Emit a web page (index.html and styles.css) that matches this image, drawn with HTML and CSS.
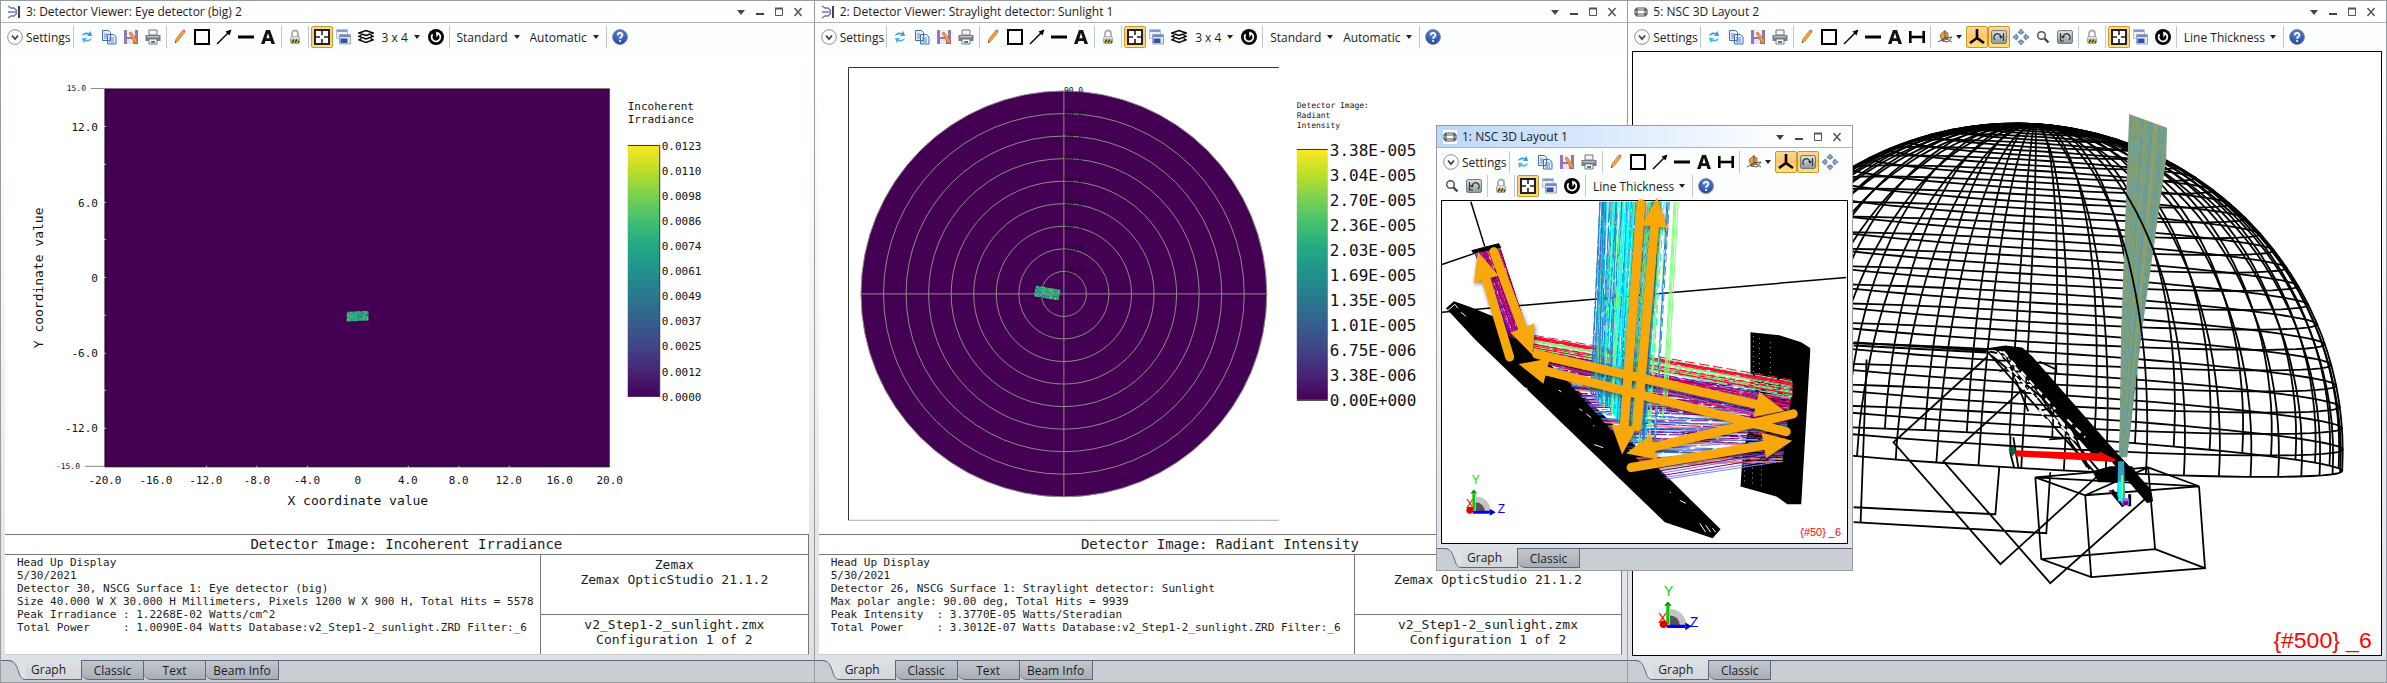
FILE: index.html
```html
<!DOCTYPE html>
<html lang="en">
<head>
  <meta charset="UTF-8" />
  <title>OpticStudio - Head Up Display</title>
  <meta name="viewport" content="width=device-width, initial-scale=1.0">
  <link rel="stylesheet" href="styles.css">
</head>
<body>

  <!-- shared icons -->
  <svg class="defs" width="0" height="0" aria-hidden="true">
    <defs>
      <linearGradient id="viridis" x1="0" y1="1" x2="0" y2="0">
        <stop offset="0" stop-color="#440154"/><stop offset=".1" stop-color="#482475"/>
        <stop offset=".2" stop-color="#414487"/><stop offset=".3" stop-color="#355f8d"/>
        <stop offset=".4" stop-color="#2a788e"/><stop offset=".5" stop-color="#21918c"/>
        <stop offset=".6" stop-color="#22a884"/><stop offset=".7" stop-color="#44bf70"/>
        <stop offset=".8" stop-color="#7ad151"/><stop offset=".9" stop-color="#bddf26"/>
        <stop offset="1" stop-color="#fde725"/>
      </linearGradient>
      <linearGradient id="lockBody" x1="0" y1="0" x2="0" y2="1">
        <stop offset="0" stop-color="#eee"/><stop offset="1" stop-color="#999"/>
      </linearGradient>
      <linearGradient id="greyBtn" x1="0" y1="0" x2="0" y2="1">
        <stop offset="0" stop-color="#dfe5e6"/><stop offset="1" stop-color="#8f9b9e"/>
      </linearGradient>
      <radialGradient id="helpFill" cx=".5" cy=".3" r=".8">
        <stop offset="0" stop-color="#5b8be0"/><stop offset="1" stop-color="#153a94"/>
      </radialGradient>

      <symbol id="i-detector" viewBox="0 0 14 14">
        <path d="M12 1v12" stroke="#444" stroke-width="2"/>
        <path d="M1 1l3 2h3l3 3M1 7h9M1 13l3-2h3l3-3" fill="none" stroke="#6b74c4" stroke-width="1.4"/>
      </symbol>
      <symbol id="i-layout" viewBox="0 0 14 14">
        <path d="M3 3h8v8H3zM3 3L1 5v4l2 2M11 3l2 2v4l-2 2M1 5h12M1 9h12" fill="none" stroke="#555" stroke-width="1.200"/>
      </symbol>
      <symbol id="i-chevron" viewBox="0 0 16 16">
        <circle cx="8" cy="8" r="7.300" fill="#fff" stroke="#8a8f96"/>
        <path d="M5 6.500l3 3.500 3-3.500" fill="none" stroke="#444" stroke-width="1.800"/>
      </symbol>
      <symbol id="i-refresh" viewBox="0 0 16 16">
        <path d="M3 7c.5-3 4-4.500 7-3l1.500-2 1.500 5H8l1.500-1.500C7.500 4.700 5 5.500 3 7z" fill="#2f9de0"/>
        <path d="M13 9c-.5 3-4 4.500-7 3l-1.500 2L3 9h5l-1.500 1.500C8.500 11.300 11 10.500 13 9z" fill="#45b4ee"/>
      </symbol>
      <symbol id="i-copy" viewBox="0 0 16 16">
        <path d="M1.500 1.500h6l2 2v8h-8zM6.500 5.500h6l2.500 2.500v7H6.500z" fill="#e8f1fc" stroke="#3f6db5"/>
        <path d="M3 5h3M3 7h3M3 9h3M8 9h5M8 11h5M8 13h5" stroke="#5b86c8"/>
      </symbol>
      <symbol id="i-save" viewBox="0 0 16 16">
        <path d="M1 1h14v14H1z" fill="#9077b5"/>
        <path d="M4 1h8v7H4z" fill="#f4effa"/><path d="M4 10h6v5H4z" fill="#e9e2f2"/>
        <path d="M6 4l2-1 6 8 .5 4-3.500-2z" fill="#f0a030" stroke="#b5452c" stroke-width=".5"/>
      </symbol>
      <symbol id="i-print" viewBox="0 0 16 16">
        <path d="M4 1h8v5H4z" fill="#f5f5f5" stroke="#777"/>
        <path d="M.5 6h15v6H.5z" fill="#777c80"/><path d="M2 7h12v1.500H2z" fill="#b9bec2"/>
        <path d="M4 10h8v5H4z" fill="#fff" stroke="#777"/><path d="M6 12h2v2H6z" fill="#2a9d8f"/><path d="M8 12h2v2H8z" fill="#3771c8"/>
      </symbol>
      <symbol id="i-pencil" viewBox="0 0 16 16">
        <path d="M3 14l1-4 7-9 2 2-7 9z" fill="#f3a43a" stroke="#b9682a" stroke-width=".7"/>
        <path d="M11 1l2 2 .6-1.200L12 .4z" fill="#d2625a"/><path d="M3 14l.5-2 1 1z" fill="#333"/>
      </symbol>
      <symbol id="i-rect" viewBox="0 0 16 16"><path d="M1 1h14v14H1z" fill="none" stroke="#000" stroke-width="2"/></symbol>
      <symbol id="i-arrow" viewBox="0 0 16 16">
        <path d="M1 15L12 4" stroke="#000" stroke-width="1.500"/><path d="M15.500.5l-2 6-4-4z"/>
      </symbol>
      <symbol id="i-line" viewBox="0 0 16 16"><path d="M0 8h16" stroke="#000" stroke-width="3"/></symbol>
      <symbol id="i-text" viewBox="0 0 16 16">
        <path d="M1 15L6 1h4l5 14h-3.500l-1-3h-5l-1 3zM6.400 9.300h3.200L8 4z" fill="#111" fill-rule="evenodd"/>
      </symbol>
      <symbol id="i-dim" viewBox="0 0 16 16"><path d="M1.300 2v12M14.700 2v12" stroke="#000" stroke-width="2.600"/><path d="M2 8h12" stroke="#000" stroke-width="2.600"/></symbol>
      <symbol id="i-lock" viewBox="0 0 16 16">
        <path d="M5 8V4.500a3 3 0 0 1 6 0V8" fill="none" stroke="#a9adb1" stroke-width="1.800"/>
        <rect x="3.500" y="7.500" width="9" height="7" rx="1.500" fill="url(#lockBody)" stroke="#8c8c8c" stroke-width=".6"/>
        <path d="M4 10.500h8v3H4z" fill="#d8bb32"/><path d="M5 13.500l2-3M8 13.500l2-3M11 13.500l1-1.500" stroke="#222" stroke-width="1.300"/>
      </symbol>
      <symbol id="i-fit" viewBox="0 0 16 16">
        <path d="M1 1h14v14H1z" fill="#fff" stroke="#222" stroke-width="2"/>
        <path d="M8 2v4M8 10v4M2 8h4M10 8h4" fill="none" stroke="#222" stroke-width="1.600"/>
      </symbol>
      <symbol id="i-windows" viewBox="0 0 16 16">
        <path d="M.5.500h11v9H.5z" fill="#eaf1fb" stroke="#b5c2da"/><path d="M1 1h10v2H1z" fill="#7f9bd6"/>
        <path d="M3.500 5.500h11v9.500h-11z" fill="#e3e9f5" stroke="#98a3bf"/><path d="M4 6h10v2H4z" fill="#6d88cc"/><path d="M4.500 9.500h7v4.500h-7z" fill="#3650a8"/>
      </symbol>
      <symbol id="i-layers" viewBox="0 0 16 16">
        <path d="M1 4l7-2.500L15 4 8 6.500zM3.500 6L1 7.300l7 2.700 7-2.700L12.500 6M3.500 9.500L1 10.800l7 2.700 7-2.700-2.500-1.300" fill="none" stroke="#000" stroke-width="1.400"/>
      </symbol>
      <symbol id="i-reset" viewBox="0 0 16 16">
        <circle cx="8" cy="8" r="8"/><path d="M4.600 5.200A4.400 4.400 0 1 0 9.800 4" fill="none" stroke="#fff" stroke-width="1.800"/>
        <path d="M8 2.600l3.600 1.700L8.500 8.500z" fill="#fff"/>
      </symbol>
      <symbol id="i-help" viewBox="0 0 16 16">
        <circle cx="8" cy="8" r="7.400" fill="url(#helpFill)" stroke="#7f8793"/>
        <path d="M5.700 6.200c0-3 4.800-3 4.700-.2 0 1.700-2.300 1.800-2.300 3.700" fill="none" stroke="#fff" stroke-width="1.800"/><circle cx="8.100" cy="12" r="1.100" fill="#fff"/>
      </symbol>
      <symbol id="i-view" viewBox="0 0 16 16">
        <path d="M3 6l4-4 4 2v6l-6 2z" fill="#ee9a32" stroke="#7b5a2a" stroke-width=".7"/>
        <path d="M8 1v8l7 4M8 9L1 13M5 12l3-3 7-1-4 5z" fill="none" stroke="#555"/>
      </symbol>
      <symbol id="i-tripod" viewBox="0 0 16 16"><path d="M8 0v9l7 5M8 9l-7 5" fill="none" stroke="#000" stroke-width="2.600"/></symbol>
      <symbol id="i-rotate" viewBox="0 0 16 16">
        <rect x=".6" y="1.600" width="14.800" height="12.800" rx="1.500" fill="url(#greyBtn)" stroke="#69757a"/>
        <path d="M4 11a3.600 3.600 0 1 1 6-3M12.500 4v8" fill="none" stroke="#333" stroke-width="1.200"/><path d="M8 7h4l-2 3z" fill="#333"/>
      </symbol>
      <symbol id="i-undo" viewBox="0 0 16 16">
        <rect x=".6" y="1.600" width="14.800" height="12.800" rx="1.500" fill="url(#greyBtn)" stroke="#69757a"/>
        <path d="M12 11a3.600 3.600 0 1 0-6-3M3.500 4v8M3 12h4" fill="none" stroke="#333" stroke-width="1.200"/><path d="M8 7H4l2 3z" fill="#333"/>
      </symbol>
      <symbol id="i-move" viewBox="0 0 16 16">
        <path d="M8 0l3 3.500H9.300V5H6.700V3.500H5zM8 16l3-3.500H9.300V11H6.700v1.500H5zM0 8l3.500-3v1.700H5v2.600H3.500V11zM16 8l-3.500-3v1.700H11v2.600h1.500V11z" fill="#8ea6cc" stroke="#4c6594" stroke-width=".7"/>
      </symbol>
      <symbol id="i-zoom" viewBox="0 0 16 16">
        <circle cx="6.500" cy="6.500" r="3.800" fill="#f3f7fa" stroke="#555" stroke-width="1.500"/><path d="M9.500 9.500l4 4" stroke="#444" stroke-width="2.400"/>
      </symbol>
      <symbol id="i-caret" viewBox="0 0 6 4"><path d="M0 0h6L3 4z" fill="#222"/></symbol>
      <symbol id="i-menu" viewBox="0 0 10 10"><path d="M1 3h8L5 8z" fill="#444"/></symbol>
      <symbol id="i-min" viewBox="0 0 10 10"><path d="M1 7h8" stroke="#444" stroke-width="2"/></symbol>
      <symbol id="i-max" viewBox="0 0 10 10"><path d="M1.500 1.500h7v7h-7z" fill="none" stroke="#555"/><path d="M1 1.500h8" stroke="#555" stroke-width="2"/></symbol>
      <symbol id="i-close" viewBox="0 0 10 10"><path d="M1.500 1l7 8M8.500 1l-7 8" stroke="#555" stroke-width="1.500"/></symbol>
      <symbol id="i-tabedge" viewBox="0 0 25 20">
        <path d="M6 0C14 0 15 5 17 10S19 20 25 20V0z" fill="#dde0e4"/>
        <path d="M0 .5h6C14 .5 15 5 17 10s2 9.500 8 9.500" fill="none" stroke="#5c6880"/>
      </symbol>
      <symbol id="i-axes" viewBox="0 0 42 46">
        <path d="M11 37V22A15 15 0 0 1 26 37z" fill="#c4c4c4"/><path d="M11 37V28A9 9 0 0 1 20 37z" fill="#555"/>
        <path d="M9 36V19" stroke="#0c0" stroke-width="3"/><path d="M5.500 19L9 15l3.500 4z" fill="#0a8a0a"/>
        <path d="M8 38h17" stroke="#00f" stroke-width="3"/><path d="M25 34.500l6 3.500-6 3.500z" fill="#00b"/>
        <circle cx="5" cy="36" r="3.500" fill="#d00"/>
      </symbol>
    </defs>
  </svg>

  <main class="desk">

    <section class="window viewer">
      <header class="titlebar">
        <svg class="app"><use href="#i-detector"/></svg>
        <h2>3: Detector Viewer: Eye detector (big) 2</h2>
        <div class="controls">
          <button aria-label="Menu"><svg><use href="#i-menu"/></svg></button>
          <button aria-label="Minimize"><svg><use href="#i-min"/></svg></button>
          <button aria-label="Maximize"><svg><use href="#i-max"/></svg></button>
          <button aria-label="Close"><svg><use href="#i-close"/></svg></button>
        </div>
      </header>
      <div class="toolbar">
        <button class="settings"><svg><use href="#i-chevron"/></svg>Settings</button>
        <i class="sep"></i>
        <button class="tool" aria-label="Refresh"><svg><use href="#i-refresh"/></svg></button>
        <button class="tool" aria-label="Copy"><svg><use href="#i-copy"/></svg></button>
        <button class="tool" aria-label="Save"><svg><use href="#i-save"/></svg></button>
        <button class="tool" aria-label="Print"><svg><use href="#i-print"/></svg></button>
        <i class="sep"></i>
        <button class="tool" aria-label="Pencil"><svg><use href="#i-pencil"/></svg></button>
        <button class="tool" aria-label="Rectangle"><svg><use href="#i-rect"/></svg></button>
        <button class="tool" aria-label="Arrow"><svg><use href="#i-arrow"/></svg></button>
        <button class="tool" aria-label="Line"><svg><use href="#i-line"/></svg></button>
        <button class="tool" aria-label="Text"><svg><use href="#i-text"/></svg></button>
        <i class="sep"></i>
        <button class="tool" aria-label="Lock"><svg><use href="#i-lock"/></svg></button>
        <i class="sep"></i>
        <button class="tool on" aria-label="Fit"><svg><use href="#i-fit"/></svg></button>
        <button class="tool" aria-label="Windows"><svg><use href="#i-windows"/></svg></button>
        <button class="tool" aria-label="Layers"><svg><use href="#i-layers"/></svg></button>
        <label class="drop"><select aria-label="Grid"><option>3 x 4</option></select><svg><use href="#i-caret"/></svg></label>
        <button class="tool" aria-label="Reset"><svg><use href="#i-reset"/></svg></button>
        <i class="sep"></i>
        <label class="drop"><select aria-label="Style"><option>Standard</option></select><svg><use href="#i-caret"/></svg></label>
        <label class="drop"><select aria-label="Scale"><option>Automatic</option></select><svg><use href="#i-caret"/></svg></label>
        <i class="sep"></i>
        <button class="tool" aria-label="Help"><svg><use href="#i-help"/></svg></button>
      </div>
      <div class="report">
        <div class="plot">
          <svg viewBox="5 51 804 480" preserveAspectRatio="xMinYMin meet">
            <path d="M91 88.500h14M85 466.500h20" stroke="#888"/>
            <rect x="105" y="89" width="505" height="378" fill="#440154"/>
            <path d="M610 89H105v378h505" fill="none" stroke="#111"/>
            <path d="M104 126.500h2M104 164.500h2M104 202.500h2M104 239.500h2M104 277.500h2M104 315.500h2M104 353.500h2M104 390.500h2M104 428.500h2M206.500 466v2M257 466v2M307.500 466v2M408.500 466v2M459 466v2M509.500 466v2" stroke="#ccc"/>
            <g id="speckEye"></g>
            <g class="t8 end"><text x="86" y="91">15.0</text><text x="80" y="469">-15.0</text></g>
            <g class="t11 end">
              <text x="98" y="131">12.0</text><text x="98" y="207">6.0</text><text x="98" y="282">0</text>
              <text x="98" y="357">-6.0</text><text x="98" y="432">-12.0</text>
            </g>
            <g class="t11 mid">
              <text x="105" y="484">-20.0</text><text x="156" y="484">-16.0</text><text x="206" y="484">-12.0</text>
              <text x="257" y="484">-8.0</text><text x="307" y="484">-4.0</text><text x="358" y="484">0</text>
              <text x="408" y="484">4.0</text><text x="459" y="484">8.0</text><text x="509" y="484">12.0</text>
              <text x="560" y="484">16.0</text><text x="610" y="484">20.0</text>
            </g>
            <g class="t13 mid">
              <text x="358" y="505">X coordinate value</text>
              <text transform="translate(43 278) rotate(-90)">Y coordinate value</text>
            </g>
            <g class="t11"><text x="628" y="110">Incoherent</text><text x="628" y="123">Irradiance</text></g>
            <rect x="628" y="145" width="32" height="252" fill="url(#viridis)"/>
            <path d="M628 145.500h32v252" fill="none" stroke="#333"/>
            <g class="t11">
              <text x="662" y="150">0.0123</text><text x="662" y="175">0.0110</text><text x="662" y="200">0.0098</text>
              <text x="662" y="225">0.0086</text><text x="662" y="250">0.0074</text><text x="662" y="275">0.0061</text>
              <text x="662" y="300">0.0049</text><text x="662" y="325">0.0037</text><text x="662" y="350">0.0025</text>
              <text x="662" y="376">0.0012</text><text x="662" y="401">0.0000</text>
            </g>
          </svg>
        </div>
        <div class="legend">
          <h3>Detector Image: Incoherent Irradiance</h3>
          <pre class="info">Head Up Display
5/30/2021
Detector 30, NSCG Surface 1: Eye detector (big)
Size 40.000 W X 30.000 H Millimeters, Pixels 1200 W X 900 H, Total Hits = 5578
Peak Irradiance : 1.2268E-02 Watts/cm^2
Total Power     : 1.0090E-04 Watts Database:v2_Step1-2_sunlight.ZRD Filter:_6</pre>
          <div class="stamp">
            <p>Zemax<br>Zemax OpticStudio 21.1.2</p>
            <p>v2_Step1-2_sunlight.zmx<br>Configuration 1 of 2</p>
          </div>
        </div>
      </div>
      <nav class="tabs">
        <svg class="edge"><use href="#i-tabedge"/></svg>
        <button class="tab active">Graph</button>
        <button class="tab">Classic</button>
        <button class="tab">Text</button>
        <button class="tab wide">Beam Info</button>
      </nav>
    </section>

    <section class="window viewer">
      <header class="titlebar">
        <svg class="app"><use href="#i-detector"/></svg>
        <h2>2: Detector Viewer: Straylight detector: Sunlight 1</h2>
        <div class="controls">
          <button aria-label="Menu"><svg><use href="#i-menu"/></svg></button>
          <button aria-label="Minimize"><svg><use href="#i-min"/></svg></button>
          <button aria-label="Maximize"><svg><use href="#i-max"/></svg></button>
          <button aria-label="Close"><svg><use href="#i-close"/></svg></button>
        </div>
      </header>
      <div class="toolbar">
        <button class="settings"><svg><use href="#i-chevron"/></svg>Settings</button>
        <i class="sep"></i>
        <button class="tool" aria-label="Refresh"><svg><use href="#i-refresh"/></svg></button>
        <button class="tool" aria-label="Copy"><svg><use href="#i-copy"/></svg></button>
        <button class="tool" aria-label="Save"><svg><use href="#i-save"/></svg></button>
        <button class="tool" aria-label="Print"><svg><use href="#i-print"/></svg></button>
        <i class="sep"></i>
        <button class="tool" aria-label="Pencil"><svg><use href="#i-pencil"/></svg></button>
        <button class="tool" aria-label="Rectangle"><svg><use href="#i-rect"/></svg></button>
        <button class="tool" aria-label="Arrow"><svg><use href="#i-arrow"/></svg></button>
        <button class="tool" aria-label="Line"><svg><use href="#i-line"/></svg></button>
        <button class="tool" aria-label="Text"><svg><use href="#i-text"/></svg></button>
        <i class="sep"></i>
        <button class="tool" aria-label="Lock"><svg><use href="#i-lock"/></svg></button>
        <i class="sep"></i>
        <button class="tool on" aria-label="Fit"><svg><use href="#i-fit"/></svg></button>
        <button class="tool" aria-label="Windows"><svg><use href="#i-windows"/></svg></button>
        <button class="tool" aria-label="Layers"><svg><use href="#i-layers"/></svg></button>
        <label class="drop"><select aria-label="Grid"><option>3 x 4</option></select><svg><use href="#i-caret"/></svg></label>
        <button class="tool" aria-label="Reset"><svg><use href="#i-reset"/></svg></button>
        <i class="sep"></i>
        <label class="drop"><select aria-label="Style"><option>Standard</option></select><svg><use href="#i-caret"/></svg></label>
        <label class="drop"><select aria-label="Scale"><option>Automatic</option></select><svg><use href="#i-caret"/></svg></label>
        <i class="sep"></i>
        <button class="tool" aria-label="Help"><svg><use href="#i-help"/></svg></button>
      </div>
      <div class="report">
        <div class="plot">
          <svg viewBox="819 51 804 480" preserveAspectRatio="xMinYMin meet">
            <path d="M1279 67.500H848.500V520.500" fill="none" stroke="#333"/>
            <path d="M849 520.500h430" stroke="#aaa"/>
            <circle cx="1064" cy="294" r="203" fill="#440154"/>
            <g id="rings" fill="none" stroke="#8c8c84"></g>
            <g id="speckSun"></g>
            <path d="M861 294h406M1064 91v406" stroke="#8c8c84"/>
            <g class="t8">
              <text x="1064" y="93">90.0</text><text x="1064" y="116">80.0</text><text x="1064" y="139">70.0</text>
              <text x="1064" y="161">60.0</text><text x="1064" y="184">50.0</text><text x="1064" y="206">40.0</text>
              <text x="1064" y="229">30.0</text><text x="1064" y="251">20.0</text><text x="1064" y="274">10.0</text>
            </g>
            <g class="t8"><text x="1297" y="108">Detector Image:</text><text x="1297" y="118">Radiant</text><text x="1297" y="128">Intensity</text></g>
            <rect x="1297" y="149" width="31" height="251" fill="url(#viridis)"/>
            <path d="M1297 149.500h31M1297 400.500h31" stroke="#333"/>
            <g class="t16">
              <text x="1330" y="156">3.38E-005</text><text x="1330" y="181">3.04E-005</text><text x="1330" y="206">2.70E-005</text>
              <text x="1330" y="231">2.36E-005</text><text x="1330" y="256">2.03E-005</text><text x="1330" y="281">1.69E-005</text>
              <text x="1330" y="306">1.35E-005</text><text x="1330" y="331">1.01E-005</text><text x="1330" y="356">6.75E-006</text>
              <text x="1330" y="381">3.38E-006</text><text x="1330" y="406">0.00E+000</text>
            </g>
          </svg>
        </div>
        <div class="legend">
          <h3>Detector Image: Radiant Intensity</h3>
          <pre class="info">Head Up Display
5/30/2021
Detector 26, NSCG Surface 1: Straylight detector: Sunlight
Max polar angle: 90.00 deg, Total Hits = 9939
Peak Intensity  : 3.3770E-05 Watts/Steradian
Total Power     : 3.3012E-07 Watts Database:v2_Step1-2_sunlight.ZRD Filter:_6</pre>
          <div class="stamp">
            <p><br>Zemax OpticStudio 21.1.2</p>
            <p>v2_Step1-2_sunlight.zmx<br>Configuration 1 of 2</p>
          </div>
        </div>
      </div>
      <nav class="tabs">
        <svg class="edge"><use href="#i-tabedge"/></svg>
        <button class="tab active">Graph</button>
        <button class="tab">Classic</button>
        <button class="tab">Text</button>
        <button class="tab wide">Beam Info</button>
      </nav>
    </section>

    <section class="window layout">
      <header class="titlebar">
        <svg class="app"><use href="#i-layout"/></svg>
        <h2>5: NSC 3D Layout 2</h2>
        <div class="controls">
          <button aria-label="Menu"><svg><use href="#i-menu"/></svg></button>
          <button aria-label="Minimize"><svg><use href="#i-min"/></svg></button>
          <button aria-label="Maximize"><svg><use href="#i-max"/></svg></button>
          <button aria-label="Close"><svg><use href="#i-close"/></svg></button>
        </div>
      </header>
      <div class="toolbar">
        <button class="settings"><svg><use href="#i-chevron"/></svg>Settings</button>
        <i class="sep"></i>
        <button class="tool" aria-label="Refresh"><svg><use href="#i-refresh"/></svg></button>
        <button class="tool" aria-label="Copy"><svg><use href="#i-copy"/></svg></button>
        <button class="tool" aria-label="Save"><svg><use href="#i-save"/></svg></button>
        <button class="tool" aria-label="Print"><svg><use href="#i-print"/></svg></button>
        <i class="sep"></i>
        <button class="tool" aria-label="Pencil"><svg><use href="#i-pencil"/></svg></button>
        <button class="tool" aria-label="Rectangle"><svg><use href="#i-rect"/></svg></button>
        <button class="tool" aria-label="Arrow"><svg><use href="#i-arrow"/></svg></button>
        <button class="tool" aria-label="Line"><svg><use href="#i-line"/></svg></button>
        <button class="tool" aria-label="Text"><svg><use href="#i-text"/></svg></button>
        <button class="tool" aria-label="Dimension"><svg><use href="#i-dim"/></svg></button>
        <i class="sep"></i>
        <button class="tool more" aria-label="View"><svg><use href="#i-view"/></svg><svg class="caret"><use href="#i-caret"/></svg></button>
        <button class="tool on" aria-label="Axes"><svg><use href="#i-tripod"/></svg></button>
        <button class="tool on" aria-label="Rotate"><svg><use href="#i-rotate"/></svg></button>
        <button class="tool" aria-label="Pan"><svg><use href="#i-move"/></svg></button>
        <button class="tool" aria-label="Zoom"><svg><use href="#i-zoom"/></svg></button>
        <button class="tool" aria-label="Undo"><svg><use href="#i-undo"/></svg></button>
        <i class="sep"></i>
        <button class="tool" aria-label="Lock"><svg><use href="#i-lock"/></svg></button>
        <i class="sep"></i>
        <button class="tool on" aria-label="Fit"><svg><use href="#i-fit"/></svg></button>
        <button class="tool" aria-label="Windows"><svg><use href="#i-windows"/></svg></button>
        <button class="tool" aria-label="Reset"><svg><use href="#i-reset"/></svg></button>
        <i class="sep"></i>
        <button class="drop">Line Thickness<svg><use href="#i-caret"/></svg></button>
        <i class="sep"></i>
        <button class="tool" aria-label="Help"><svg><use href="#i-help"/></svg></button>
      </div>
      <div class="scene">
        <svg viewBox="1634 52 748 604" preserveAspectRatio="xMaxYMax meet">
          <g id="dome" fill="none" stroke="#000" stroke-width="1.800"></g>
          <g id="sunBeam"></g>
          <g id="domeFront" fill="none" stroke="#000" stroke-width="1.800"></g>
          <!-- housings -->
          <g fill="none" stroke="#000" stroke-width="1.800">
            <path d="M2036 478l113-10 51 19-114 9zM2036 478l6 82 50 18 114-9-6-82M2086 496l6 82M2149 468l7 82 50 19M2156 550l-114 10M2036 478l164 9M2086 496l63-28"/>
            <path d="M1987 358l-93 85 107 122 97-88M2020 393l-76 69 107 122 98-87M1854 508l142 7 4-48M1854 523l193 11 4-61M1861 523l6-163M1854 346l133 7M1854 343l133 8M2011 436v18l4 15M2014 438l5 30M2057 365v10M2040 362l17 8"/>
            <path d="M1987 351l112 126M1997 350l105 124M2003 350l97 110M2010 349l95 108M2016 349l90 106M1990 352l38 8 18 30 20 15 10 30M2000 372l28-12M2020 393l26-10M2042 411l24-6M2050 440l28-2M2068 438l20 30M1992 356l60 50M2005 352l24 60M2030 380l34 50M2060 400l30 70"/>
          </g>
          <path d="M1986 349l20-3 17 2 10 9 85 97 34 36 2 12-6 2-36-42-20-8-46-52-42-50z"/>
          <path d="M1998 353l40 46M2004 352l12 14M2022 372l34 38M2008 368l30 36M2054 418l24 26M2068 420l18 18M2040 410l16 22" stroke="#fff" stroke-width="2" stroke-dasharray="7 5"/>
          <path d="M2093 472l18-5h22l8 12-20 4h-22zM2110 492l4-2 12 16-3 2zM2129 495h3v12h-3z"/>
          <path d="M2016 451l84 3v-2l16 8-1 3-12-1-87-5z" fill="#f00"/>
          <path d="M2009 450l5-3 3 6-4 4z" fill="#063"/>
          <path d="M2119 462h6l1 40-8-5z" fill="#2f9fc8"/><path d="M2119 482h3v20h-3z" fill="#0ff"/><path d="M2122 476h2v28h-2z" fill="#80ff80"/>
          <path d="M2123 499h7v7h-7z" fill="#7d78f5"/><path d="M2124 502h5v4h-5zM2110 491h3v3h-3z" fill="#800080"/>
          <use href="#i-axes" x="1658" y="586" width="46" height="50"/>
          <g class="axis"><text x="1664" y="597" fill="#0d0">Y</text><text x="1658" y="624" fill="#f00">X</text><text x="1690" y="628" fill="#00f">Z</text></g>
          <text class="mark big" x="2373" y="649">{#500} _6</text>
        </svg>
      </div>
      <nav class="tabs">
        <svg class="edge"><use href="#i-tabedge"/></svg>
        <button class="tab active">Graph</button>
        <button class="tab">Classic</button>
      </nav>
    </section>

    <section class="window floating">
      <header class="titlebar">
        <svg class="app"><use href="#i-layout"/></svg>
        <h2>1: NSC 3D Layout 1</h2>
        <div class="controls">
          <button aria-label="Menu"><svg><use href="#i-menu"/></svg></button>
          <button aria-label="Minimize"><svg><use href="#i-min"/></svg></button>
          <button aria-label="Maximize"><svg><use href="#i-max"/></svg></button>
          <button aria-label="Close"><svg><use href="#i-close"/></svg></button>
        </div>
      </header>
      <div class="toolbar">
        <button class="settings"><svg><use href="#i-chevron"/></svg>Settings</button>
        <i class="sep"></i>
        <button class="tool" aria-label="Refresh"><svg><use href="#i-refresh"/></svg></button>
        <button class="tool" aria-label="Copy"><svg><use href="#i-copy"/></svg></button>
        <button class="tool" aria-label="Save"><svg><use href="#i-save"/></svg></button>
        <button class="tool" aria-label="Print"><svg><use href="#i-print"/></svg></button>
        <i class="sep"></i>
        <button class="tool" aria-label="Pencil"><svg><use href="#i-pencil"/></svg></button>
        <button class="tool" aria-label="Rectangle"><svg><use href="#i-rect"/></svg></button>
        <button class="tool" aria-label="Arrow"><svg><use href="#i-arrow"/></svg></button>
        <button class="tool" aria-label="Line"><svg><use href="#i-line"/></svg></button>
        <button class="tool" aria-label="Text"><svg><use href="#i-text"/></svg></button>
        <button class="tool" aria-label="Dimension"><svg><use href="#i-dim"/></svg></button>
        <i class="sep"></i>
        <button class="tool more" aria-label="View"><svg><use href="#i-view"/></svg><svg class="caret"><use href="#i-caret"/></svg></button>
        <button class="tool on" aria-label="Axes"><svg><use href="#i-tripod"/></svg></button>
        <button class="tool on" aria-label="Rotate"><svg><use href="#i-rotate"/></svg></button>
        <button class="tool" aria-label="Pan"><svg><use href="#i-move"/></svg></button>
        <button class="tool" aria-label="Zoom"><svg><use href="#i-zoom"/></svg></button>
        <button class="tool" aria-label="Undo"><svg><use href="#i-undo"/></svg></button>
        <i class="sep"></i>
        <button class="tool" aria-label="Lock"><svg><use href="#i-lock"/></svg></button>
        <i class="sep"></i>
        <button class="tool on" aria-label="Fit"><svg><use href="#i-fit"/></svg></button>
        <button class="tool" aria-label="Windows"><svg><use href="#i-windows"/></svg></button>
        <button class="tool" aria-label="Reset"><svg><use href="#i-reset"/></svg></button>
        <i class="sep"></i>
        <button class="drop">Line Thickness<svg><use href="#i-caret"/></svg></button>
        <i class="sep"></i>
        <button class="tool" aria-label="Help"><svg><use href="#i-help"/></svg></button>
      </div>
      <div class="scene">
        <svg viewBox="1441 201 407 342">
          <path d="M1470 201l14 45M1441 264l32-11M1441 312l406-35" fill="none" stroke="#000" stroke-width="1.500"/>
          <path d="M1751 332l29 3 22 7 9 6v4l-9 153h-14l-11-8-36-10 2-32 8-35z"/>
          <path d="M1754 336v100M1760 338v96M1771 342v90M1745 456v28M1753 458v28M1762 440v48" stroke="#aaa" stroke-dasharray="1 4"/>
          <path d="M1445 308l8-7 17 6 27 11 23 22 20 16 30 27 90 87 61 60-8 9-48-16-190-183z"/>
          <path d="M1447 310l7-6 3 4M1460 312l5 4M1525 388l2 1M1558 390l3 2M1579 409l3 2M1586 414l5 4M1593 426h1M1603 448l-9-3M1680 501l6 3M1670 493h1M1700 524l6 9M1706 526l5 7M1713 529l3 4" fill="none" stroke="#fff"/>
          <path d="M1471 250l27-7 2 4-27 6z" stroke="#000"/>
          <g id="rays"></g>
          <g class="arrows" id="arrows"></g>
          <use href="#i-axes" x="1464" y="475" width="42" height="46"/>
          <g class="axis small"><text x="1471" y="485" fill="#0d0">Y</text><text x="1465" y="509" fill="#f00">X</text><text x="1497" y="514" fill="#00f">Z</text></g>
          <text class="mark" x="1842" y="537">{#50} _6</text>
        </svg>
      </div>
      <nav class="tabs">
        <svg class="edge"><use href="#i-tabedge"/></svg>
        <button class="tab active">Graph</button>
        <button class="tab">Classic</button>
      </nav>
    </section>

  </main>

  <script src="script.js"></script>
</body>
</html>
```
FILE: styles.css
```css
* { box-sizing: border-box; }
html, body { height: 100%; }
body {
  margin: 0;
  font-family: "Segoe UI", "Open Sans", sans-serif;
  font-size: 12px;
  color: #1c1c1c;
  background: #fff;
}
button, select {
  font: inherit;
  color: inherit;
  background: none;
  border: 0;
  padding: 0;
  margin: 0;
}
svg { display: block; flex: none; }
.defs { position: absolute; }

.desk {
  position: relative;
  display: flex;
  height: 100vh;
  overflow: hidden;
}

/* windows */
.window {
  display: flex;
  flex-direction: column;
  min-width: 0;
  border: 1px solid #979ba2;
  border-right-width: 0;
  background: linear-gradient(#fff 60px, #f3f4f6 45%, #dcdfe4);
}
.viewer { flex: 814; }
.layout { flex: 759; border-right-width: 1px; }
.floating {
  position: absolute;
  left: 1436px;
  top: 125px;
  width: 417px;
  height: 446px;
  border-right-width: 1px;
}
.floating .titlebar { background: linear-gradient(90deg, #bcd8fc, #d3e5fd 30%, #fff 85%); }
.titlebar {
  display: flex;
  align-items: center;
  height: 22px;
  padding: 0 6px;
  border-bottom: 1px solid #b0b3b8;
}
.titlebar h2 {
  flex: 1;
  margin: 0 0 0 5px;
  font-size: 12px;
  font-weight: normal;
  line-height: 20px;
  white-space: nowrap;
}
.app { width: 14px; height: 14px; background: #fff; }
.controls { display: flex; }
.controls button { width: 19px; height: 20px; display: grid; place-items: center; }
.controls svg { width: 10px; height: 10px; }

/* toolbar */
.toolbar {
  display: flex;
  flex-wrap: wrap;
  align-items: center;
  padding: 2px 4px;
  background: #fcfdfd;
}
.toolbar svg { width: 16px; height: 16px; }
.settings { display: flex; align-items: center; gap: 3px; height: 24px; padding: 0 0 0 2px; }
.sep { width: 1px; height: 22px; margin: 0 2px; background: #c0c8d4; }
.tool { display: grid; place-items: center; width: 22px; height: 24px; }
.tool.on {
  height: 22px;
  border: 1px solid #c29b29;
  border-radius: 2px;
  background: linear-gradient(#fdd79a, #ffc666 50%, #ffe27e);
}
.tool.more { display: flex; align-items: center; width: 33px; gap: 3px; padding-left: 4px; }
.drop { display: flex; align-items: center; height: 24px; gap: 5px; padding: 0 5px; }
.drop select { appearance: none; }
.drop svg, .toolbar .caret { width: 6px; height: 4px; }

/* detector report */
.report {
  flex: 1;
  display: flex;
  flex-direction: column;
  min-height: 0;
  margin: 0 5px 5px 4px;
  background: #fff;
}
.plot { flex: 1; min-height: 0; }
.plot svg, .scene svg { width: 100%; height: 100%; }
.plot text { font-family: "Lucida Console", "DejaVu Sans Mono", monospace; fill: #111; }
.t8 { font-size: 8px; }
.t11 { font-size: 11px; }
.t13 { font-size: 13px; }
.t16 { font-size: 16px; }
.end { text-anchor: end; }
.mid { text-anchor: middle; }

.legend {
  display: grid;
  grid-template-columns: 2fr 1fr;
  border: 1px solid #777;
  border-left: 0;
  border-bottom-color: #ccc;
  font-family: "Lucida Console", "DejaVu Sans Mono", monospace;
}
.legend h3 {
  grid-column: 1 / -1;
  margin: 0;
  font-size: 14px;
  font-weight: normal;
  line-height: 19px;
  text-align: center;
  border-bottom: 1px solid #777;
}
.info {
  margin: 0;
  padding: 1px 0 20px 12px;
  font: inherit;
  font-size: 11px;
  line-height: 13px;
}
.stamp {
  display: grid;
  grid-template-rows: 3fr 2fr;
  border-left: 1px solid #777;
  font-size: 13px;
  line-height: 15px;
  text-align: center;
}
.stamp p { margin: 0; padding-top: 2px; }
.stamp p + p { border-top: 1px solid #777; }

/* 3d views */
.scene {
  flex: 1;
  min-height: 0;
  margin: 0 4px 4px;
  border: 1px solid #000;
  background: #fff;
}
.scene svg { overflow: visible; }
.mark { font: 11px "Liberation Sans", Arial, sans-serif; fill: #f00; text-anchor: end; }
.mark.big { font-size: 23px; }
.axis { font: 14px "Liberation Sans", Arial, sans-serif; }
.axis.small { font-size: 12px; }
.arrows { fill: #f9a80c; stroke: #f9a80c; filter: drop-shadow(1px 2px 2px rgba(0,0,0,0.5)); }

/* tabs */
.tabs {
  display: flex;
  height: 22px;
  border-top: 1px solid #5c6880;
  background: #cacdd2;
}
.tabs .edge { width: 25px; height: 20px; margin-top: -1px; }
.tab {
  width: 62px;
  height: 19px;
  border: 1px solid #5c6880;
  border-width: 0 1px 1px 0;
  border-bottom-left-radius: 7px;
  background: linear-gradient(#c3c7cd, #a8aeb8);
}
.tab.wide { width: 73px; }
.tab.active {
  width: 56px;
  height: 20px;
  margin-top: -1px;
  padding-left: 5px;
  border-radius: 0;
  text-align: left;
  background: linear-gradient(#dde0e4, #d3d6da);
}
```
FILE: script.js
```js
const NS = "http://www.w3.org/2000/svg";
let seed = 7;

function rnd() {
  seed = (seed * 16807) % 2147483647;
  return seed / 2147483647;
}

function add(id, tag, attrs) {
  const el = document.createElementNS(NS, tag);
  for (const k in attrs) el.setAttribute(k, attrs[k]);
  document.getElementById(id).appendChild(el);
}

function mix(a, b, t) {
  return [a[0] + (b[0] - a[0]) * t, a[1] + (b[1] - a[1]) * t];
}

// n rays running from segment a-b to segment c-d
function rays(id, n, a, b, c, d, colors, jitter, dash) {
  for (let i = 0; i < n; i++) {
    const t = rnd();
    const p = mix(a, b, t);
    const q = mix(c, d, Math.min(1, Math.max(0, t + (rnd() - 0.5) * jitter)));
    const attrs = { x1: p[0], y1: p[1], x2: q[0], y2: q[1], stroke: colors[i % colors.length], "stroke-width": 1 };
    if (dash) attrs["stroke-dasharray"] = Math.round(6 + rnd() * 20) + " " + Math.round(1 + rnd() * 4);
    add(id, "line", attrs);
  }
}

// noisy detector spot: parallelogram from o along u and v
function speckle(id, o, u, v, nx, ny) {
  const pal = ["#21918c", "#22a884", "#44bf70", "#2a788e", "#35b779", "#7ad151", "#1fa187"];
  for (let i = 0; i < nx; i++) {
    for (let j = 0; j < ny; j++) {
      add(id, "rect", {
        x: o[0] + u[0] * i / nx + v[0] * j / ny,
        y: o[1] + u[1] * i / nx + v[1] * j / ny,
        width: 1.5, height: 1.5, fill: pal[Math.floor(rnd() * pal.length)]
      });
    }
  }
}
speckle("speckEye", [347, 312], [21, -1], [0, 9], 21, 9);
speckle("speckSun", [1036, 286], [24, 4], [-2, 10], 24, 10);

for (let i = 1; i <= 9; i++) {
  add("rings", "circle", { cx: 1064, cy: 294, r: 203 * i / 9 });
}

// hemisphere wireframe, seen slightly from above and rolled
const R = 328, CX = 2016, CY = 452, ROLL = 0.06, TILT = 0.05;
function project(lat, lon) {
  const x = Math.cos(lat) * Math.sin(lon);
  const z = Math.cos(lat) * Math.cos(lon);
  const y = Math.sin(lat) - z * TILT;
  const px = CX + R * (x * Math.cos(ROLL) + y * Math.sin(ROLL));
  const py = CY + R * (x * Math.sin(ROLL) - y * Math.cos(ROLL));
  return px.toFixed(1) + " " + py.toFixed(1);
}
const deg = Math.PI / 180;
for (let lat = 0; lat < 90; lat += 3.75) {
  const pts = [];
  for (let lon = 0; lon <= 360; lon += 5) pts.push(project(lat * deg, lon * deg));
  add("dome", "polyline", { points: pts.join(",") });
}
for (let lon = 1.2; lon < 360; lon += 7.5) {
  const pts = [];
  for (let lat = 0; lat <= 90; lat += 3) pts.push(project(lat * deg, lon * deg));
  const front = lon > 20 && lon < 32;
  add(front ? "domeFront" : "dome", "polyline", { points: pts.join(",") });
}

// sunlight entering the dome
const sun = ["#98a35c", "#6b9f97", "#87a273", "#5f98a4"];
add("sunBeam", "path", { d: "M2130 114l38 14-1 32-24 170-15 128h-8l2-128z", fill: "#7ba080" });
rays("sunBeam", 60, [2131, 115], [2167, 129], [2120, 456], [2128, 456], sun, 0.1, true);

// rays of the close-up view
rays("rays", 60, [1474, 253], [1500, 248], [1506, 335], [1531, 345], ["#8000c0", "#9010e0", "#800080", "#ff0040"], 0.1, true);
rays("rays", 100, [1555, 368], [1645, 468], [1793, 388], [1783, 462], ["#800080", "#8080ff", "#2878c8", "#fa8072", "#700090"], 0.25, true);
rays("rays", 26, [1538, 348], [1538, 364], [1793, 396], [1785, 425], ["#800080", "#ff0040", "#7878ff"], 0.3, true);
rays("rays", 34, [1534, 334], [1532, 350], [1793, 379], [1793, 398], ["#80ff80", "#ff0040", "#80ff80", "#ff0040", "#ff0040"], 0.15, true);
rays("rays", 6, [1655, 468], [1672, 484], [1780, 446], [1775, 470], ["#8080ff", "#800080"], 0.1);
rays("rays", 90, [1602, 201], [1664, 201], [1592, 385], [1642, 455], ["#00ffff", "#1e78d2", "#3c8cc8", "#00ffff", "#80ff80"], 0.1, true);
rays("rays", 50, [1596, 201], [1670, 201], [1590, 395], [1655, 450], ["#00ffff", "#3c8cc8", "#80ff80", "#1e78d2"], 0.1, true);
rays("rays", 4, [1670, 201], [1679, 201], [1658, 430], [1668, 405], ["#80ff80"], 0.1);

function arrow(x1, y1, x2, y2) {
  const len = Math.hypot(x2 - x1, y2 - y1);
  const ux = (x2 - x1) / len, uy = (y2 - y1) / len;
  const bx = x2 - ux * 29, by = y2 - uy * 29;
  add("arrows", "path", { d: `M${x1} ${y1}L${bx + ux} ${by + uy}`, "stroke-width": 9, "stroke-linecap": "round" });
  add("arrows", "path", { d: `M${x2} ${y2}L${bx - uy * 13} ${by + ux * 13}L${bx + uy * 13} ${by - ux * 13}z`, stroke: "none" });
}
arrow(1637, 427, 1657, 197);
arrow(1641, 203, 1622, 455);
arrow(1509, 357, 1477, 251);
arrow(1493, 251, 1532, 355);
arrow(1787, 432, 1518, 364);
arrow(1536, 354, 1785, 411);
arrow(1631, 468, 1793, 441);
arrow(1794, 414, 1626, 454);
```
